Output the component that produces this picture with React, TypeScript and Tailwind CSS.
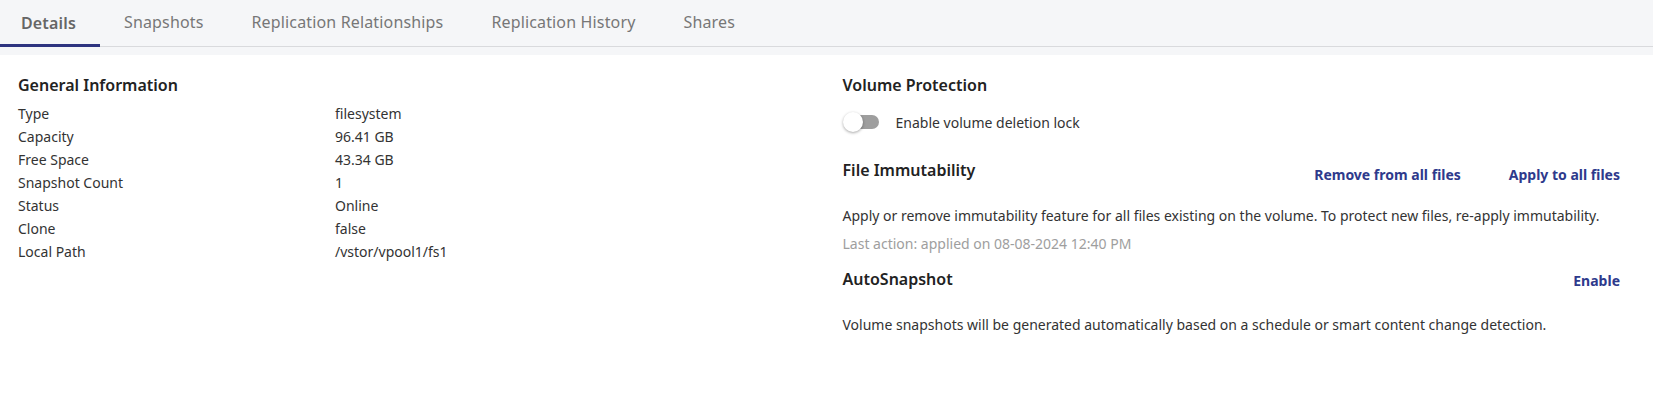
import React from "react";

const tabs = ["Details", "Snapshots", "Replication Relationships", "Replication History", "Shares"];

const rows: [string, string][] = [
  ["Type", "filesystem"],
  ["Capacity", "96.41 GB"],
  ["Free Space", "43.34 GB"],
  ["Snapshot Count", "1"],
  ["Status", "Online"],
  ["Clone", "false"],
  ["Local Path", "/vstor/vpool1/fs1"],
];

export default function App() {
  return (
    <div className="w-[1653px] h-[393px] bg-white text-[#222] font-['Noto_Sans',sans-serif]">
      <div className="bg-[#f5f6f8] pb-[8px]">
        <div className="flex h-[47px] border-b border-[#d9dadd]">
          {tabs.map((t, i) => (
            <div
              key={t}
              className={
                i === 0
                  ? "w-[100px] pl-[21px] flex items-center text-[16px] tracking-[0.15px] font-semibold text-[#666] border-b-[3px] border-[#2e3480] -mb-px pt-[1px]"
                  : "px-[24px] flex items-center text-[16px] tracking-[0.15px] text-[#777] pb-[2px]"
              }
            >
              {t}
            </div>
          ))}
        </div>
      </div>
      <div className="grid grid-cols-2 gap-x-[32px] px-[17px] pt-[18px]">
        <div className="pl-px">
          <div className="text-[16px] leading-6 font-semibold text-[#222]">General Information</div>
          <div className="mt-[5px] grid grid-cols-[317px_1fr]">
            {rows.map(([k, v]) => (
              <React.Fragment key={k}>
                <div className="h-[23px] flex items-center text-[14px] text-[#333]">{k}</div>
                <div className="h-[23px] flex items-center text-[14px] text-[#333]">{v}</div>
              </React.Fragment>
            ))}
          </div>
        </div>
        <div className="pr-[16px]">
          <div className="text-[16px] leading-6 font-semibold text-[#222]">Volume Protection</div>
          <div className="mt-[15px] flex items-center h-[20px]">
            <div className="relative w-[38px] h-[20px] flex items-center shrink-0">
              <div className="absolute left-[8px] w-[28px] h-[14px] rounded-full bg-[#9e9e9e]" />
              <div className="absolute left-0 w-[20px] h-[20px] rounded-full bg-white shadow-[0_1px_3px_rgba(0,0,0,0.35)]" />
            </div>
            <div className="ml-[15px] text-[14px] text-[#333]">Enable volume deletion lock</div>
          </div>

          <div className="mt-[26px] flex justify-between items-start h-[24px]">
            <div className="text-[16px] leading-6 font-semibold text-[#222]">File Immutability</div>
            <div className="flex gap-[48px] pt-[7px] text-[14px] leading-5 font-bold text-[#2e3a8c]">
              <span>Remove from all files</span>
              <span>Apply to all files</span>
            </div>
          </div>
          <div className="mt-[24px] text-[14px] leading-5 text-[#333]">
            Apply or remove immutability feature for all files existing on the volume. To protect new files, re-apply immutability.
          </div>
          <div className="mt-[8px] text-[14px] leading-5 text-[#9e9e9e]">Last action: applied on 08-08-2024 12:40 PM</div>

          <div className="mt-[13px] flex justify-between items-start h-[24px]">
            <div className="text-[16px] leading-6 font-semibold text-[#222]">AutoSnapshot</div>
            <div className="pt-[4px] text-[14px] leading-5 font-bold text-[#2e3a8c]">Enable</div>
          </div>
          <div className="mt-[24px] text-[14px] leading-5 text-[#333]">
            Volume snapshots will be generated automatically based on a schedule or smart content change detection.
          </div>
        </div>
      </div>
    </div>
  );
}
